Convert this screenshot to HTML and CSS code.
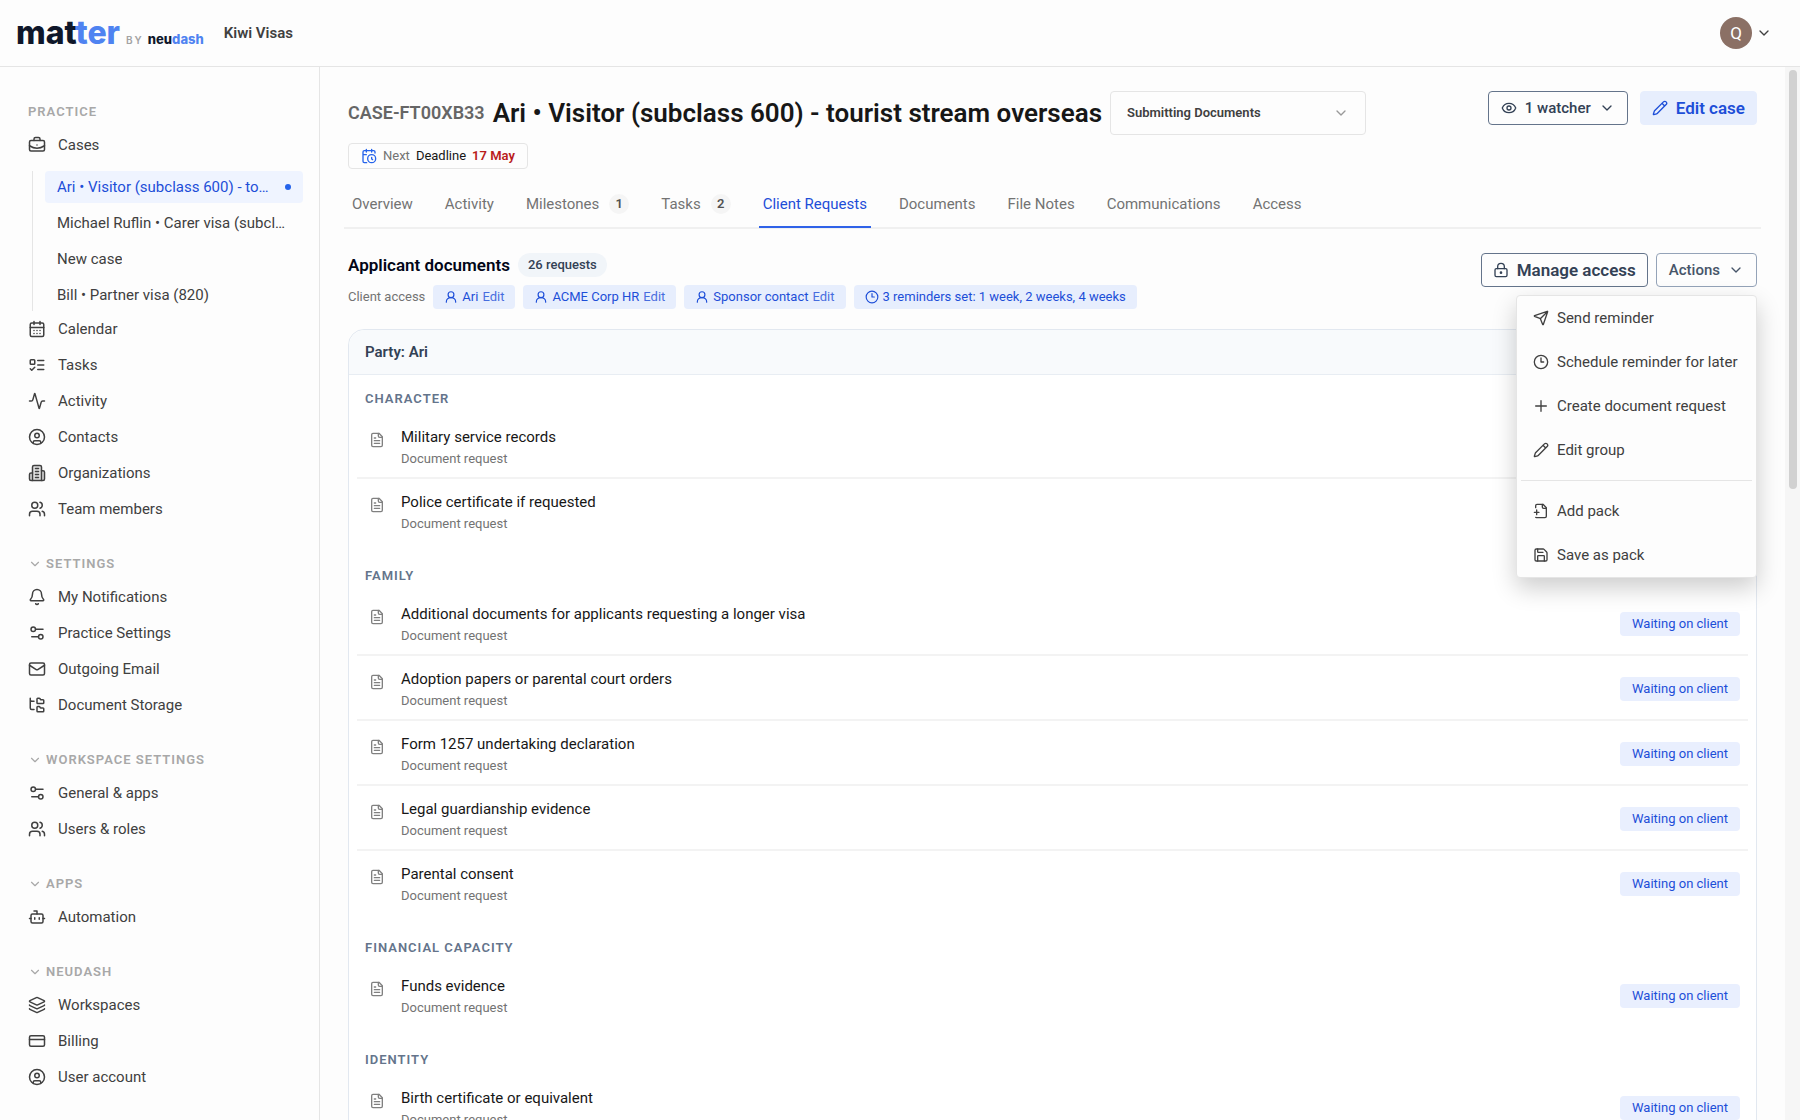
FILE: index.html
```html
<!DOCTYPE html>
<html lang="en"><head>
	<meta charset="UTF-8">
	<meta name="viewport" content="width=device-width, initial-scale=1.0">
	<title>Client Requests - Kiwi Visas</title>

<link rel="stylesheet" href="styles.css">

</head>
<body>

<!-- icons -->
<svg class="sprite" aria-hidden="true">
	<symbol id="i-down" viewBox="0 0 24 24"><path d="m6 9 6 6 6-6"/></symbol>
	<symbol id="i-cases" viewBox="0 0 24 24"><path d="M12 12h.01"/><path d="M16 6V4a2 2 0 0 0-2-2h-4a2 2 0 0 0-2 2v2"/><path d="M22 13a18.15 18.15 0 0 1-20 0"/><rect width="20" height="14" x="2" y="6" rx="2"/></symbol>
	<symbol id="i-calendar" viewBox="0 0 24 24"><path d="M8 2v4M16 2v4"/><rect width="18" height="18" x="3" y="4" rx="2"/><path d="M3 10h18M8 14h.01M12 14h.01M16 14h.01M8 18h.01M12 18h.01M16 18h.01"/></symbol>
	<symbol id="i-tasks" viewBox="0 0 24 24"><rect x="3" y="5" width="6" height="6" rx="1"/><path d="m3 17 2 2 4-4M13 6h8M13 12h8M13 18h8"/></symbol>
	<symbol id="i-activity" viewBox="0 0 24 24"><path d="M22 12h-2.48a2 2 0 0 0-1.93 1.46l-2.35 8.36a.25.25 0 0 1-.48 0L9.24 2.18a.25.25 0 0 0-.48 0l-2.35 8.36A2 2 0 0 1 4.49 12H2"/></symbol>
	<symbol id="i-contact" viewBox="0 0 24 24"><circle cx="12" cy="12" r="10"/><circle cx="12" cy="10" r="3"/><path d="M7 20.662V19a2 2 0 0 1 2-2h6a2 2 0 0 1 2 2v1.662"/></symbol>
	<symbol id="i-org" viewBox="0 0 24 24"><g fill="currentColor" fill-opacity=".15"><path d="M6 22V4a2 2 0 0 1 2-2h8a2 2 0 0 1 2 2v18Z"/><path d="M6 12H4a2 2 0 0 0-2 2v6a2 2 0 0 0 2 2h2"/><path d="M18 9h2a2 2 0 0 1 2 2v9a2 2 0 0 1-2 2h-2"/></g><path d="M10 6h4M10 10h4M10 14h4M10 18h4"/></symbol>
	<symbol id="i-users" viewBox="0 0 24 24"><path d="M16 21v-2a4 4 0 0 0-4-4H6a4 4 0 0 0-4 4v2"/><circle cx="9" cy="7" r="4"/><path d="M22 21v-2a4 4 0 0 0-3-3.87M16 3.13a4 4 0 0 1 0 7.75"/></symbol>
	<symbol id="i-bell" viewBox="0 0 24 24"><path d="M10.268 21a2 2 0 0 0 3.464 0"/><path d="M3.262 15.326A1 1 0 0 0 4 17h16a1 1 0 0 0 .74-1.673C19.41 13.956 18 12.499 18 8A6 6 0 0 0 6 8c0 4.499-1.411 5.956-2.738 7.326"/></symbol>
	<symbol id="i-sliders" viewBox="0 0 24 24"><path d="M20 7h-9M14 17H5"/><circle cx="17" cy="17" r="3"/><circle cx="7" cy="7" r="3"/></symbol>
	<symbol id="i-mail" viewBox="0 0 24 24"><rect width="20" height="16" x="2" y="4" rx="2"/><path d="m22 7-8.97 5.7a1.94 1.94 0 0 1-2.06 0L2 7"/></symbol>
	<symbol id="i-tree" viewBox="0 0 24 24"><path d="M20 10a1 1 0 0 0 1-1V6a1 1 0 0 0-1-1h-2.5a1 1 0 0 1-.8-.4l-.9-1.2A1 1 0 0 0 15 3h-2a1 1 0 0 0-1 1v5a1 1 0 0 0 1 1Z"/><path d="M20 21a1 1 0 0 0 1-1v-3a1 1 0 0 0-1-1h-2.9a1 1 0 0 1-.88-.55l-.42-.85a1 1 0 0 0-.92-.6H13a1 1 0 0 0-1 1v5a1 1 0 0 0 1 1Z"/><path d="M3 5a2 2 0 0 0 2 2h3M3 3v13a2 2 0 0 0 2 2h3"/></symbol>
	<symbol id="i-bot" viewBox="0 0 24 24"><path d="M12 8V4H8"/><rect width="16" height="12" x="4" y="8" rx="2"/><path d="M2 14h2M20 14h2M15 13v2M9 13v2"/></symbol>
	<symbol id="i-layers" viewBox="0 0 24 24"><path d="M12.83 2.18a2 2 0 0 0-1.66 0L2.6 6.08a1 1 0 0 0 0 1.83l8.58 3.91a2 2 0 0 0 1.66 0l8.58-3.9a1 1 0 0 0 0-1.83z"/><path d="M2 12a1 1 0 0 0 .58.91l8.6 3.91a2 2 0 0 0 1.65 0l8.58-3.9A1 1 0 0 0 22 12"/><path d="M2 17a1 1 0 0 0 .58.91l8.6 3.91a2 2 0 0 0 1.65 0l8.58-3.9A1 1 0 0 0 22 17"/></symbol>
	<symbol id="i-card" viewBox="0 0 24 24"><rect width="20" height="14" x="2" y="5" rx="2"/><path d="M2 10h20"/></symbol>
	<symbol id="i-calclock" viewBox="0 0 24 24"><path d="M21 7.5V6a2 2 0 0 0-2-2H5a2 2 0 0 0-2 2v14a2 2 0 0 0 2 2h3.5M16 2v4M8 2v4M3 10h5"/><path d="M17.5 17.5 16 16.3V14"/><circle cx="16" cy="16" r="6"/></symbol>
	<symbol id="i-eye" viewBox="0 0 24 24"><path d="M2.062 12.348a1 1 0 0 1 0-.696 10.75 10.75 0 0 1 19.876 0 1 1 0 0 1 0 .696 10.75 10.75 0 0 1-19.876 0"/><circle cx="12" cy="12" r="3"/></symbol>
	<symbol id="i-pencil" viewBox="0 0 24 24"><path d="M21.174 6.812a1 1 0 0 0-3.986-3.987L3.842 16.174a2 2 0 0 0-.5.83l-1.321 4.352a.5.5 0 0 0 .623.622l4.353-1.32a2 2 0 0 0 .83-.497zM15 5l4 4"/></symbol>
	<symbol id="i-lock" viewBox="0 0 24 24"><circle cx="12" cy="16" r="1"/><rect x="3" y="10" width="18" height="12" rx="2"/><path d="M7 10V7a5 5 0 0 1 10 0v3"/></symbol>
	<symbol id="i-person" viewBox="0 0 24 24"><circle cx="12" cy="8" r="5"/><path d="M4 21v-1a8 7 0 0 1 16 0v1"/></symbol>
	<symbol id="i-clock" viewBox="0 0 24 24"><circle cx="12" cy="12" r="10"/><path d="M12 6v6h4"/></symbol>
	<symbol id="i-send" viewBox="0 0 24 24"><path d="M14.536 21.686a.5.5 0 0 0 .937-.024l6.5-19a.496.496 0 0 0-.635-.635l-19 6.5a.5.5 0 0 0-.024.937l7.93 3.18a2 2 0 0 1 1.112 1.11zM21.854 2.147l-10.94 10.939"/></symbol>
	<symbol id="i-plus" viewBox="0 0 24 24"><path d="M4 12h16M12 4v16"/></symbol>
	<symbol id="i-fileplus" viewBox="0 0 24 24"><path d="M4 7V4a2 2 0 0 1 2-2h9l5 5v13a2 2 0 0 1-2 2H5a2 2 0 0 1-1-.5"/><path d="M14 2v4a2 2 0 0 0 2 2h4M2 14h7M5.500 10.500v7"/></symbol>
	<symbol id="i-save" viewBox="0 0 24 24"><path d="M15.200 3a2 2 0 0 1 1.400.6l3.800 3.800a2 2 0 0 1 .6 1.400V19a2 2 0 0 1-2 2H5a2 2 0 0 1-2-2V5a2 2 0 0 1 2-2z"/><path d="M17 21v-7a1 1 0 0 0-1-1H8a1 1 0 0 0-1 1v7M7 3v4a1 1 0 0 0 1 1h7"/></symbol>
	<symbol id="i-file" viewBox="0 0 24 24"><path d="M15 2H6a2 2 0 0 0-2 2v16a2 2 0 0 0 2 2h12a2 2 0 0 0 2-2V7Z"/><path d="M14 2v4a2 2 0 0 0 2 2h4M10 9H8M16 13H8M16 17H8"/></symbol>
</svg>

<header class="topbar">
	<a class="logo" href="#"><span class="logo-main">mat<b>ter</b></span><span class="logo-by">BY</span><span class="logo-sub">neu<b>dash</b></span></a>
	<span class="workspace">Kiwi Visas</span>
	<button class="user" type="button" aria-label="Account"><span class="avatar">Q</span><svg class="ic16"><use href="#i-down"/></svg></button>
</header>

<div class="layout">

<nav class="sidebar">
	<h2>Practice</h2>
	<ul>
		<li><a href="#"><svg class="ic18"><use href="#i-cases"/></svg>Cases</a>
			<ul class="sub">
				<li><a class="current" href="#"><span>Ari • Visitor (subclass 600) - tourist stream overseas</span><i class="dot"></i></a></li>
				<li><a href="#"><span>Michael Ruflin • Carer visa (subclass 836)</span></a></li>
				<li><a href="#"><span>New case</span></a></li>
				<li><a href="#"><span>Bill • Partner visa (820)</span></a></li>
			</ul>
		</li>
		<li><a href="#"><svg class="ic18"><use href="#i-calendar"/></svg>Calendar</a></li>
		<li><a href="#"><svg class="ic18"><use href="#i-tasks"/></svg>Tasks</a></li>
		<li><a href="#"><svg class="ic18"><use href="#i-activity"/></svg>Activity</a></li>
		<li><a href="#"><svg class="ic18"><use href="#i-contact"/></svg>Contacts</a></li>
		<li><a href="#"><svg class="ic18"><use href="#i-org"/></svg>Organizations</a></li>
		<li><a href="#"><svg class="ic18"><use href="#i-users"/></svg>Team members</a></li>
	</ul>
	<h2><svg class="ic14"><use href="#i-down"/></svg>Settings</h2>
	<ul>
		<li><a href="#"><svg class="ic18"><use href="#i-bell"/></svg>My Notifications</a></li>
		<li><a href="#"><svg class="ic18"><use href="#i-sliders"/></svg>Practice Settings</a></li>
		<li><a href="#"><svg class="ic18"><use href="#i-mail"/></svg>Outgoing Email</a></li>
		<li><a href="#"><svg class="ic18"><use href="#i-tree"/></svg>Document Storage</a></li>
	</ul>
	<h2><svg class="ic14"><use href="#i-down"/></svg>Workspace settings</h2>
	<ul>
		<li><a href="#"><svg class="ic18"><use href="#i-sliders"/></svg>General &amp; apps</a></li>
		<li><a href="#"><svg class="ic18"><use href="#i-users"/></svg>Users &amp; roles</a></li>
	</ul>
	<h2><svg class="ic14"><use href="#i-down"/></svg>Apps</h2>
	<ul>
		<li><a href="#"><svg class="ic18"><use href="#i-bot"/></svg>Automation</a></li>
	</ul>
	<h2><svg class="ic14"><use href="#i-down"/></svg>Neudash</h2>
	<ul>
		<li><a href="#"><svg class="ic18"><use href="#i-layers"/></svg>Workspaces</a></li>
		<li><a href="#"><svg class="ic18"><use href="#i-card"/></svg>Billing</a></li>
		<li><a href="#"><svg class="ic18"><use href="#i-contact"/></svg>User account</a></li>
	</ul>
</nav>

<main class="content">
	<div class="case-head">
		<div class="case-title">
			<span class="case-id">CASE-FT00XB33</span>
			<h1>Ari • Visitor (subclass 600) - tourist stream overseas</h1>
			<div class="stage">
				<select aria-label="Stage"><option>Submitting Documents</option></select>
				<svg class="ic16"><use href="#i-down"/></svg>
			</div>
		</div>
		<div class="case-buttons">
			<button class="btn" type="button"><svg class="ic16"><use href="#i-eye"/></svg>1 watcher<svg class="ic16"><use href="#i-down"/></svg></button>
			<button class="btn btn-large btn-blue" type="button"><svg class="ic16"><use href="#i-pencil"/></svg>Edit case</button>
		</div>
	</div>

	<div class="next"><svg class="ic16"><use href="#i-calclock"/></svg><span>Next</span><em>Deadline</em><strong>17 May</strong></div>

	<nav class="tabs">
		<a href="#">Overview</a>
		<a href="#">Activity</a>
		<a href="#">Milestones<b>1</b></a>
		<a href="#">Tasks<b>2</b></a>
		<a class="active" href="#">Client Requests</a>
		<a href="#">Documents</a>
		<a href="#">File Notes</a>
		<a href="#">Communications</a>
		<a href="#">Access</a>
	</nav>

	<div class="group-head">
		<div class="group-info">
			<div class="group-title"><h2>Applicant documents</h2><span class="count">26 requests</span></div>
			<div class="access">
				<span>Client access</span>
				<button class="chip" type="button"><svg class="ic14"><use href="#i-person"/></svg>Ari <i>Edit</i></button>
				<button class="chip" type="button"><svg class="ic14"><use href="#i-person"/></svg>ACME Corp HR <i>Edit</i></button>
				<button class="chip" type="button"><svg class="ic14"><use href="#i-person"/></svg>Sponsor contact <i>Edit</i></button>
				<button class="chip" type="button"><svg class="ic14"><use href="#i-clock"/></svg>3 reminders set: 1 week, 2 weeks, 4 weeks</button>
			</div>
		</div>
		<div class="group-buttons">
			<button class="btn btn-large" type="button"><svg class="ic16"><use href="#i-lock"/></svg>Manage access</button>
			<button class="btn btn-soft" type="button">Actions<svg class="ic16"><use href="#i-down"/></svg></button>
			<div class="menu" role="menu">
				<button type="button" role="menuitem"><svg class="ic16"><use href="#i-send"/></svg>Send reminder</button>
				<button type="button" role="menuitem"><svg class="ic16"><use href="#i-clock"/></svg>Schedule reminder for later</button>
				<button type="button" role="menuitem"><svg class="ic16"><use href="#i-plus"/></svg>Create document request</button>
				<button type="button" role="menuitem"><svg class="ic16"><use href="#i-pencil"/></svg>Edit group</button>
				<hr>
				<button type="button" role="menuitem"><svg class="ic16"><use href="#i-fileplus"/></svg>Add pack</button>
				<button type="button" role="menuitem"><svg class="ic16"><use href="#i-save"/></svg>Save as pack</button>
			</div>
		</div>
	</div>

	<div class="party">
		<h3>Party: Ari</h3>
		<section>
			<h4>Character</h4>
			<ul>
				<li><svg class="ic16"><use href="#i-file"/></svg><div><a href="#">Military service records</a><small>Document request</small></div><span class="status">Waiting on client</span></li>
				<li><svg class="ic16"><use href="#i-file"/></svg><div><a href="#">Police certificate if requested</a><small>Document request</small></div><span class="status">Waiting on client</span></li>
			</ul>
		</section>
		<section>
			<h4>Family</h4>
			<ul>
				<li><svg class="ic16"><use href="#i-file"/></svg><div><a href="#">Additional documents for applicants requesting a longer visa</a><small>Document request</small></div><span class="status">Waiting on client</span></li>
				<li><svg class="ic16"><use href="#i-file"/></svg><div><a href="#">Adoption papers or parental court orders</a><small>Document request</small></div><span class="status">Waiting on client</span></li>
				<li><svg class="ic16"><use href="#i-file"/></svg><div><a href="#">Form 1257 undertaking declaration</a><small>Document request</small></div><span class="status">Waiting on client</span></li>
				<li><svg class="ic16"><use href="#i-file"/></svg><div><a href="#">Legal guardianship evidence</a><small>Document request</small></div><span class="status">Waiting on client</span></li>
				<li><svg class="ic16"><use href="#i-file"/></svg><div><a href="#">Parental consent</a><small>Document request</small></div><span class="status">Waiting on client</span></li>
			</ul>
		</section>
		<section>
			<h4>Financial capacity</h4>
			<ul>
				<li><svg class="ic16"><use href="#i-file"/></svg><div><a href="#">Funds evidence</a><small>Document request</small></div><span class="status">Waiting on client</span></li>
			</ul>
		</section>
		<section>
			<h4>Identity</h4>
			<ul>
				<li><svg class="ic16"><use href="#i-file"/></svg><div><a href="#">Birth certificate or equivalent</a><small>Document request</small></div><span class="status">Waiting on client</span></li>
			</ul>
		</section>
	</div>
</main>

<div class="scrollbar"><i></i></div>

</div>

</body>
</html>
```
FILE: styles.css
```css
* {box-sizing: border-box;}

body {
	margin: 0;
	height: 100vh;
	display: flex;
	flex-direction: column;
	overflow: hidden;
	background: #fdfdfd;
	color: #404040;
	font: normal 400 15px/20px Roboto, 'Liberation Sans', sans-serif;}

h1, h2, h3, h4, ul {margin: 0; padding: 0;}
ul {list-style: none;}
a {color: inherit; text-decoration: none;}
i, em {font-style: normal;}
button, select {font: inherit; color: inherit; cursor: pointer;}

svg {
	flex: none;
	fill: none;
	stroke: currentColor;
	stroke-width: 2;
	stroke-linecap: round;
	stroke-linejoin: round;}
.sprite {display: none;}
.ic14 {width: 14px; height: 14px;}
.ic16 {width: 16px; height: 16px;}
.ic18 {width: 18px; height: 18px;}

/* top bar */
.topbar {
	flex: none;
	height: 67px;
	padding: 0 28px 0 16px;
	display: flex;
	align-items: center;
	border-bottom: 1px solid #e5e5e5;}

.logo {display: flex; align-items: baseline; font-family: Inter, sans-serif; font-weight: 800; color: #0f172a;}
.logo b {font-weight: inherit; color: #4f83f1;}
.logo-main {font-size: 32px; line-height: 40px;}
.logo-by {margin: 0 4px 0 6px; font-size: 10px; font-weight: 600; letter-spacing: 2px; color: #a3a3a3;}
.logo-sub {font-size: 13px;}
.workspace {margin-left: 20px; font-weight: 600;}

.user {
	margin-left: auto;
	padding: 0;
	display: flex;
	align-items: center;
	gap: 4px;
	border: none;
	background: none;}
.avatar {
	width: 32px;
	height: 32px;
	border-radius: 50%;
	background: #8b7065;
	color: #fff;
	font-size: 17px;
	line-height: 32px;
	text-align: center;}

.layout {flex: 1; min-height: 0; display: flex;}

/* sidebar */
.sidebar {
	flex: none;
	width: 320px;
	padding: 35px 16px 0 28px;
	border-right: 1px solid #e5e5e5;
	overflow: hidden;}
.sidebar h2 {
	display: flex;
	align-items: center;
	gap: 4px;
	margin: 29px 0 7px;
	font-size: 13px;
	line-height: 20px;
	font-weight: 600;
	letter-spacing: 1px;
	text-transform: uppercase;
	color: #a8a8a8;}
.sidebar h2:first-child {margin-top: 0;}
.sidebar ul {display: grid; gap: 4px;}
.sidebar a {display: flex; align-items: center; gap: 12px; height: 32px;}

.sidebar .sub {
	margin: 10px 0 -2px 4px;
	padding-left: 12px;
	border-left: 1px solid #e5e5e5;}
.sub li {min-width: 0;}
.sub a {padding: 0 12px; border-radius: 4px;}
.sub span {overflow: hidden; text-overflow: ellipsis; white-space: nowrap;}
.sub .current {background: #eff4ff; color: #1d4ed8;}
.dot {flex: none; width: 6px; height: 6px; border-radius: 50%; background: #2563eb;}

/* case */
.content {flex: 1; min-width: 0; padding: 24px 28px 0; overflow: hidden;}

.case-head {display: flex; justify-content: space-between; align-items: flex-start;}
.case-title {display: flex; align-items: center; gap: 8px; white-space: nowrap;}
.case-id {font-size: 18px; font-weight: 600; color: #666;}
.case-title h1 {font-size: 26px; line-height: 32px; font-weight: 600; color: #171717;}

.stage {display: grid; align-items: center; width: 256px;}
.stage select, .stage svg {grid-area: 1 / 1;}
.stage select {
	width: 100%;
	height: 44px;
	padding: 0 16px;
	-webkit-appearance: none;
	appearance: none;
	border: 1px solid #e5e5e5;
	border-radius: 4px;
	background: #fdfdfd;
	font-size: 13px;
	font-weight: 600;}
.stage svg {justify-self: end; margin-right: 17px; color: #999; pointer-events: none;}

.case-buttons, .group-buttons {display: flex; gap: 12px;}
.btn {
	display: flex;
	align-items: center;
	gap: 8px;
	height: 34px;
	padding: 0 12px;
	border: 1px solid #64748b;
	border-radius: 4px;
	background: #fdfdfd;
	color: #334155;
	font-weight: 500;
	white-space: nowrap;}
.btn-large {padding: 0 11px; font-size: 17px; font-weight: 600;}
.btn-blue {border-color: #e7eefd; background: #e7eefd; color: #1d4ed8;}
.btn-soft {border-color: #94a3b8; color: #475569;}

.next {
	display: flex;
	align-items: center;
	gap: 6px;
	width: fit-content;
	height: 26px;
	margin-top: 8px;
	padding: 0 12px;
	border: 1px solid #e5e5e5;
	border-radius: 4px;
	font-size: 13px;
	color: #737373;}
.next svg {color: #2563eb;}
.next em {color: #171717;}
.next strong {font-weight: 600; color: #b91c1c;}

.tabs {
	display: flex;
	gap: 24px;
	margin: 13px -4px 0;
	padding: 0 4px;
	border-bottom: 2px solid #f0f0f0;
	color: #737373;}
.tabs a {
	display: flex;
	align-items: center;
	height: 46px;
	gap: 10px;
	margin-bottom: -1px;
	padding: 0 4px;
	border-bottom: 2px solid transparent;}
.tabs .active {border-color: #2f62e8; color: #1d4ed8;}
.tabs b {
	width: 20px;
	border-radius: 50%;
	background: #f5f5f5;
	color: #525252;
	font-size: 13px;
	font-weight: 600;
	text-align: center;}

/* request group */
.group-head {display: flex; justify-content: space-between; align-items: flex-start; margin: 24px 0 20px;}
.group-title, .access {display: flex; align-items: center; gap: 8px;}
.group-title h2 {font-size: 17px; line-height: 24px; font-weight: 600; color: #020617;}
.count {
	padding: 2px 10px;
	border-radius: 12px;
	background: #f1f5f9;
	color: #334155;
	font-size: 13px;
	font-weight: 500;}
.access {margin-top: 8px; font-size: 13px; color: #737373;}
.chip {
	display: flex;
	align-items: center;
	gap: 4px;
	height: 24px;
	padding: 0 11px;
	border: none;
	border-radius: 4px;
	background: #e7eefd;
	color: #1d4ed8;}
.chip i {opacity: .8;}

.group-buttons {position: relative; gap: 8px;}
.menu {
	position: absolute;
	z-index: 1;
	top: 42px;
	right: 0;
	min-width: 241px;
	border: 1px solid #e5e5e5;
	border-radius: 4px;
	background: #fdfdfd;
	box-shadow: 0 10px 24px rgba(0, 0, 0, .2);}
.menu button {
	display: flex;
	align-items: center;
	gap: 8px;
	width: 100%;
	height: 44px;
	padding: 0 16px;
	border: none;
	background: none;
	white-space: nowrap;}
.menu hr {margin: 8px 4px; border: none; border-top: 1px solid #e5e5e5;}

.party {border: 1px solid #e2e8f0; border-radius: 16px; background: #fff;}
.party h3 {
	padding: 12px 16px;
	border-bottom: 1px solid #e8edf3;
	border-radius: 16px 16px 0 0;
	background: #f8fafc;
	color: #334155;
	font-size: 15px;
	line-height: 20px;
	font-weight: 600;}
.party section {padding: 14px 8px 8px;}
.party h4 {
	margin-bottom: 5px;
	padding: 0 8px;
	color: #64748b;
	font-size: 13px;
	line-height: 20px;
	font-weight: 600;
	letter-spacing: 1px;
	text-transform: uppercase;}
.party li {
	display: flex;
	align-items: center;
	gap: 16px;
	padding: 12px 8px 8px 12px;
	border-bottom: 2px solid #f3f3f3;}
.party li:last-child {border-color: transparent;}
.party li svg {align-self: flex-start; margin-top: 6px; color: #808080;}
.party li div {flex: 1; display: grid; gap: 1px;}
.party li a {line-height: 22px; color: #171717;}
.party li small {font-size: 13px; line-height: 20px; color: #737373;}
.status {
	margin-bottom: 2px;
	padding: 2px 12px;
	border-radius: 4px;
	background: #e9effe;
	color: #1d4ed8;
	font-size: 13px;}

.scrollbar {flex: none; width: 15px; padding: 3px 3px 3px 4px; background: #f6f6f6;}
.scrollbar i {display: block; height: 40%; border-radius: 4px; background: #d1d1d1;}
```
